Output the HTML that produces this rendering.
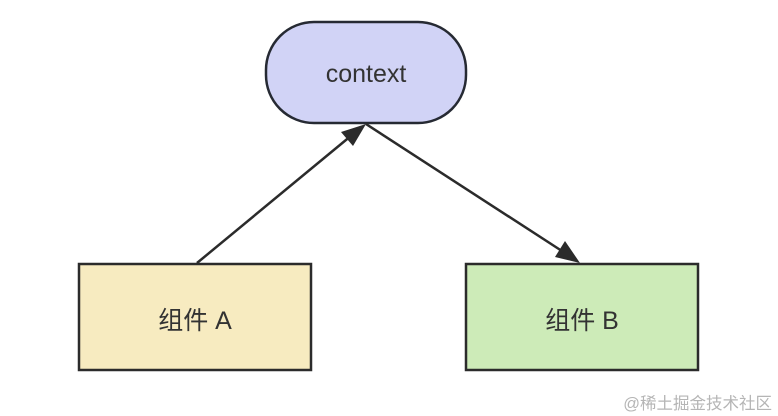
<!DOCTYPE html>
<html><head><meta charset="utf-8"><style>
html,body{margin:0;padding:0;background:#fff;width:778px;height:416px;overflow:hidden}
</style></head><body>
<svg width="778" height="416" viewBox="0 0 778 416" xmlns="http://www.w3.org/2000/svg">
<rect x="266" y="22" width="200" height="101" rx="48" ry="48" fill="#d1d3f6" stroke="#262a33" stroke-width="2.5"/>
<text x="366" y="82" text-anchor="middle" font-family="Liberation Sans, sans-serif" font-size="25" fill="#333">context</text>
<rect x="79" y="264" width="232" height="106" fill="#f7ebc0" stroke="#2b2b2b" stroke-width="2.5"/>
<text x="195" y="329" text-anchor="middle" font-family="Liberation Sans, Noto Sans CJK SC, sans-serif" font-size="25" fill="#333">组件 A</text>
<rect x="466" y="264" width="232" height="106" fill="#cdebb8" stroke="#2b2b2b" stroke-width="2.5"/>
<text x="582" y="329" text-anchor="middle" font-family="Liberation Sans, Noto Sans CJK SC, sans-serif" font-size="25" fill="#333">组件 B</text>
<line x1="197" y1="263" x2="352" y2="135" stroke="#2b2b2b" stroke-width="2.5"/>
<polygon points="366,124 341,132 353,146" fill="#2b2b2b"/>
<line x1="366" y1="124" x2="565" y2="253" stroke="#2b2b2b" stroke-width="2.5"/>
<polygon points="580,263 555,257 565,241" fill="#2b2b2b"/>
<text x="772" y="409" text-anchor="end" font-family="Liberation Sans, Noto Sans CJK SC, sans-serif" font-size="16.5" fill="#b5b5b5">@稀土掘金技术社区</text>
</svg>
</body></html>
